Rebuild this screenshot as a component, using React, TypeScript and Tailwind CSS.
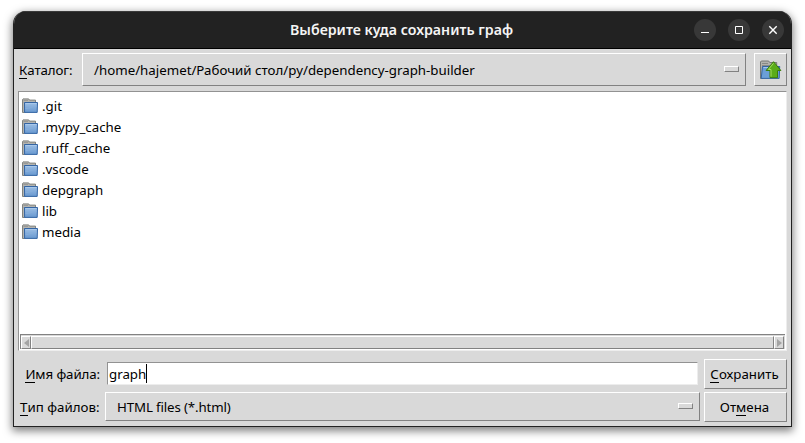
import type { ReactNode } from "react";

const raised = "border border-t-white border-l-white border-r-[#828282] border-b-[#828282] bg-[#d9d9d9]";

function Folder() {
  return (
    <svg width="16" height="16" viewBox="0 0 16 16" className="shrink-0">
      <defs>
        <linearGradient id="blue" x1="0" y1="0" x2="0" y2="1">
          <stop offset="0" stopColor="#9dbfe4" />
          <stop offset="1" stopColor="#6898d0" />
        </linearGradient>
      </defs>
      <path d="M.5 14.5V1.5L1 .9h5.7l.8 1.2h6v3H3v9.4z" fill="#b4b4b0" stroke="#81837f" />
      <path d="M1.5 2.5h4.5M1.5 4.5h11" stroke="#989895" />
      <path d="M2.5 4.5h13l-.3 9.9H2.6z" fill="url(#blue)" stroke="#3465a4" />
      <path d="M3.5 5.5h11" stroke="#a9c8ea" />
      <path d="M3.5 10.5c5 0 6-2 11-2" stroke="#87afdc" fill="none" />
    </svg>
  );
}

function UpFolder() {
  return (
    <svg width="22" height="20" viewBox="0 0 22 20" className="shrink-0">
      <path d="M.5 18.5V2L1.3 1h7.4l1 1.5h7v4H3v12z" fill="#b2b2ae" stroke="#777975" />
      <path d="M2 3.5h6M2 5.5h14" stroke="#888a85" />
      <path d="M2.5 6.5h17.2l-.5 11.9H1.2z" fill="#6b9fd8" stroke="#3465a4" />
      <path d="M3.5 7.5h15" stroke="#a5c6ea" />
      <path d="M13.5 1.7 20.9 10.5h-3.4v7.2H10v-7.2H6.1z" fill="#5aac19" stroke="#3a7d09" strokeLinejoin="round" />
      <path d="M13.5 3.4 8.3 9.5H11v7.2" fill="none" stroke="#a4df60" />
    </svg>
  );
}

function Mark({ children }: { children: ReactNode }) {
  return <span className="h-[18px] border-b border-black">{children}</span>;
}

function Label({ children, className = "" }: { children: ReactNode; className?: string }) {
  return <span className={`flex h-[18px] whitespace-pre leading-[18px] ${className}`}>{children}</span>;
}

function WindowButton({ children }: { children: ReactNode }) {
  return (
    <button className="flex size-[22px] items-center justify-center rounded-full bg-[#383838]">
      <svg width="22" height="22" viewBox="0 0 22 22" fill="none" stroke="white">{children}</svg>
    </button>
  );
}

function Indicator() {
  return <span className={`-mt-px h-[6px] w-[15px] ${raised}`} />;
}

const folders = [".git", ".mypy_cache", ".ruff_cache", ".vscode", "depgraph", "lib", "media"];

export default function App() {
  return (
    <div className="h-[443px] w-[805px] overflow-hidden bg-white pt-[11px] pl-[13px] font-['Noto_Sans','Liberation_Sans',sans-serif] text-[13.3px] text-black">
      <div className="flex h-[416px] w-[779px] flex-col overflow-hidden rounded-t-[13px] border-x border-b border-[#222222] bg-[#d9d9d9] shadow-[0_3px_9px_1px_rgba(0,0,0,0.5)]">
        <header className="grid h-[38px] shrink-0 grid-cols-[1fr_auto_1fr] items-center border-t border-t-[#3a3a3a] border-b border-b-black bg-[#222222]">
          <span />
          <h1 className="pr-[2px] text-[14.2px] font-semibold text-[#f5f5f5]">Выберите куда сохранить граф</h1>
          <div className="flex justify-end gap-3 pr-[7px]">
            <WindowButton><path d="M7 13.5h8" /></WindowButton>
            <WindowButton><path d="M7.5 7.5h7v7h-7z" /></WindowButton>
            <WindowButton><path d="m7.3 7.3 7.4 7.4m0-7.4-7.4 7.4" strokeWidth="1.4" /></WindowButton>
          </div>
        </header>

        <div className="mt-1 flex h-[33px] shrink-0 pl-[5px]">
          <Label className="mt-[8px] w-[63px] tracking-[-0.1px]"><Mark>К</Mark>аталог:</Label>
          <button className={`flex h-[33px] w-[664px] items-center justify-between pl-[11px] pr-[6px] ${raised}`}>
            <Label>/home/hajemet/Рабочий стол/py/dependency-graph-builder</Label>
            <Indicator />
          </button>
          <button className={`ml-2 flex h-[33px] w-[33px] items-center justify-center ${raised}`}><UpFolder /></button>
        </div>

        <main className="ml-1 mt-[5px] flex h-[260px] w-[769px] shrink-0 flex-col border border-t-[#929292] border-l-[#929292] border-r-[#ededed] border-b-[#ededed] bg-white pb-px pl-px pr-px">
          <ul className="flex-1 pl-[2px] pt-[3px]">
            {folders.map((name) => (
              <li key={name} className="flex h-[21px] items-center gap-1"><Folder /><Label>{name}</Label></li>
            ))}
          </ul>
          <div className="flex h-[15px] border-l border-t border-[#828282] bg-[#d9d9d9] pt-px">
            <span className={`flex h-[13px] w-[10px] items-center justify-center ${raised}`}>
              <svg width="5" height="8" viewBox="0 0 5 8"><path d="M5 0v8L0 4z" fill="#a3a3a3" /></svg>
            </span>
            <span className={`h-[13px] flex-1 ${raised}`} />
            <span className={`mr-px flex h-[13px] w-[10px] items-center justify-center ${raised}`}>
              <svg width="5" height="8" viewBox="0 0 5 8"><path d="M0 0v8l5-4z" fill="#a3a3a3" /></svg>
            </span>
          </div>
        </main>

        <div className="mt-2 flex h-[30px] shrink-0">
          <Label className="mt-[6px] w-[93px] justify-end pr-[7px] tracking-[-0.1px]"><Mark>И</Mark>мя файла:</Label>
          <div className="mt-[3px] flex h-[23px] w-[591px] border border-t-[#929292] border-l-[#929292] border-r-[#ededed] border-b-[#ededed] bg-white pl-px">
            <Label className="mt-[2px]">graph</Label><span className="mt-px h-[19px] w-px bg-black" />
          </div>
          <button className={`ml-[6px] flex h-[30px] w-[83px] items-center justify-center pr-[2px] ${raised}`}>
            <Label><Mark>С</Mark>охранить</Label>
          </button>
        </div>
        <div className="mt-[3px] flex h-[30px] shrink-0">
          <Label className="mt-[6px] w-[91px] justify-end pr-[5.5px]"><Mark>Т</Mark>ип файлов:</Label>
          <button className={`flex h-[29px] w-[595px] items-center justify-between pl-[11px] pr-[6px] ${raised}`}>
            <Label className="tracking-[-0.14px]">HTML files (*.html)</Label>
            <Indicator />
          </button>
          <button className={`ml-1 flex h-[30px] w-[83px] items-center justify-center pr-[2px] ${raised}`}>
            <Label>От<Mark>м</Mark>ена</Label>
          </button>
        </div>
      </div>
    </div>
  );
}
